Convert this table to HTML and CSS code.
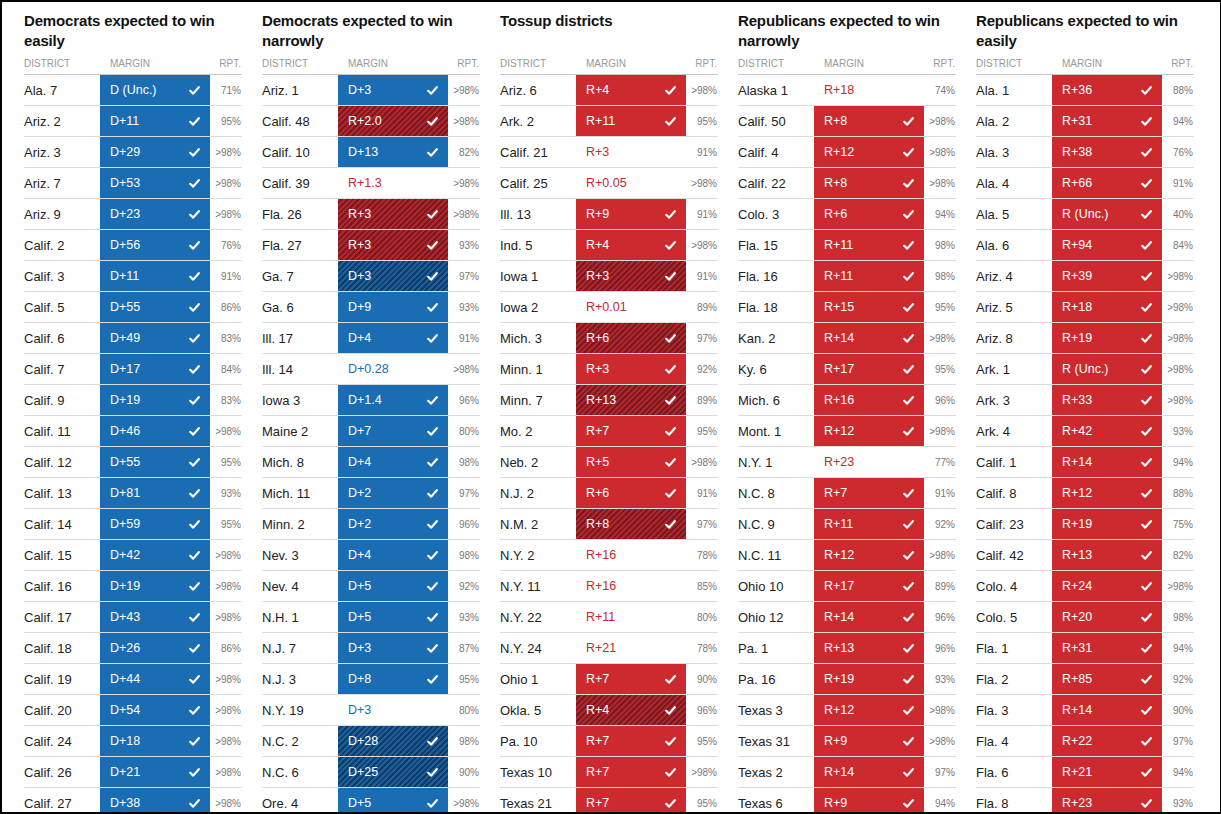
FILE: index.html
```html
<!DOCTYPE html>
<html>
<head>
<meta charset="utf-8">
<link rel="stylesheet" href="styles.css">
</head>
<body>
<div class="frame">
  <div class="board" id="board"></div>
</div>
<script src="script.js"></script>
</body>
</html>
```
FILE: styles.css
```css
html, body {
  margin: 0;
  padding: 0;
  background: #fff;
}
body {
  font-family: "Liberation Sans", Arial, sans-serif;
  color: #222;
}
.frame {
  box-sizing: border-box;
  width: 1221px;
  height: 814px;
  border: 2px solid #000;
  border-right-width: 1px;
  overflow: hidden;
}
.board {
  display: grid;
  grid-template-columns: repeat(5, 218px);
  column-gap: 20px;
  padding: 9px 0 0 22px;
}
.col {
  display: flex;
  flex-direction: column;
}
.title {
  margin: 0;
  font-size: 15px;
  line-height: 20px;
  height: 40px;
  font-weight: bold;
  color: #121212;
  letter-spacing: -0.15px;
}
.row {
  display: grid;
  grid-template-columns: 76px 110px 1fr;
  height: 30px;
  border-bottom: 1px solid #dcdcdc;
  align-items: center;
}
.row.head {
  height: 12px;
  padding: 7px 0 4px;
  border-bottom: 1px solid #c8c8c8;
  font-size: 10px;
  line-height: 12px;
  color: #999;
  text-transform: uppercase;
}
.row.head .mh {
  padding-left: 10px;
}
.dist {
  font-size: 13px;
  color: #222;
}
.rpt {
  text-align: right;
  font-size: 10px;
  color: #777;
  padding-right: 1px;
}
.row.head .rpt {
  color: #999;
}
.m {
  height: 100%;
  display: flex;
  align-items: center;
  justify-content: space-between;
  padding: 0 10px;
  font-size: 12.5px;
  color: #fff;
}
.chk {
  display: block;
}
.b {
  background: #1a6db3;
}
.r {
  background: #cd2a30;
}
.bh {
  background: repeating-linear-gradient(135deg, #1c5f9c 0 2px, #0e3c68 2px 4px);
}
.rh {
  background: repeating-linear-gradient(135deg, #b1262c 0 2px, #7a1a1e 2px 4px);
}
.bt {
  color: #1a6db3;
}
.rt {
  color: #c9272d;
}
```
FILE: script.js
```js
var cols = [
 {t:"Democrats expected to win<br>easily", rows:[
  ["Ala. 7","D (Unc.)","b","71%"],["Ariz. 2","D+11","b","95%"],["Ariz. 3","D+29","b",">98%"],["Ariz. 7","D+53","b",">98%"],
  ["Ariz. 9","D+23","b",">98%"],["Calif. 2","D+56","b","76%"],["Calif. 3","D+11","b","91%"],["Calif. 5","D+55","b","86%"],
  ["Calif. 6","D+49","b","83%"],["Calif. 7","D+17","b","84%"],["Calif. 9","D+19","b","83%"],["Calif. 11","D+46","b",">98%"],
  ["Calif. 12","D+55","b","95%"],["Calif. 13","D+81","b","93%"],["Calif. 14","D+59","b","95%"],["Calif. 15","D+42","b",">98%"],
  ["Calif. 16","D+19","b",">98%"],["Calif. 17","D+43","b",">98%"],["Calif. 18","D+26","b","86%"],["Calif. 19","D+44","b",">98%"],
  ["Calif. 20","D+54","b",">98%"],["Calif. 24","D+18","b",">98%"],["Calif. 26","D+21","b",">98%"],["Calif. 27","D+38","b",">98%"]]},
 {t:"Democrats expected to win<br>narrowly", rows:[
  ["Ariz. 1","D+3","b",">98%"],["Calif. 48","R+2.0","rh",">98%"],["Calif. 10","D+13","b","82%"],["Calif. 39","R+1.3","rt",">98%"],
  ["Fla. 26","R+3","rh",">98%"],["Fla. 27","R+3","rh","93%"],["Ga. 7","D+3","bh","97%"],["Ga. 6","D+9","b","93%"],
  ["Ill. 17","D+4","b","91%"],["Ill. 14","D+0.28","bt",">98%"],["Iowa 3","D+1.4","b","96%"],["Maine 2","D+7","b","80%"],
  ["Mich. 8","D+4","b","98%"],["Mich. 11","D+2","b","97%"],["Minn. 2","D+2","b","96%"],["Nev. 3","D+4","b","98%"],
  ["Nev. 4","D+5","b","92%"],["N.H. 1","D+5","b","93%"],["N.J. 7","D+3","b","87%"],["N.J. 3","D+8","b","95%"],
  ["N.Y. 19","D+3","bt","80%"],["N.C. 2","D+28","bh","98%"],["N.C. 6","D+25","bh","90%"],["Ore. 4","D+5","b",">98%"]]},
 {t:"Tossup districts", rows:[
  ["Ariz. 6","R+4","r",">98%"],["Ark. 2","R+11","r","95%"],["Calif. 21","R+3","rt","91%"],["Calif. 25","R+0.05","rt",">98%"],
  ["Ill. 13","R+9","r","91%"],["Ind. 5","R+4","r",">98%"],["Iowa 1","R+3","rh","91%"],["Iowa 2","R+0.01","rt","89%"],
  ["Mich. 3","R+6","rh","97%"],["Minn. 1","R+3","r","92%"],["Minn. 7","R+13","rh","89%"],["Mo. 2","R+7","r","95%"],
  ["Neb. 2","R+5","r",">98%"],["N.J. 2","R+6","r","91%"],["N.M. 2","R+8","rh","97%"],["N.Y. 2","R+16","rt","78%"],
  ["N.Y. 11","R+16","rt","85%"],["N.Y. 22","R+11","rt","80%"],["N.Y. 24","R+21","rt","78%"],["Ohio 1","R+7","r","90%"],
  ["Okla. 5","R+4","rh","96%"],["Pa. 10","R+7","r","95%"],["Texas 10","R+7","r",">98%"],["Texas 21","R+7","r","95%"]]},
 {t:"Republicans expected to win<br>narrowly", rows:[
  ["Alaska 1","R+18","rt","74%"],["Calif. 50","R+8","r",">98%"],["Calif. 4","R+12","r",">98%"],["Calif. 22","R+8","r",">98%"],
  ["Colo. 3","R+6","r","94%"],["Fla. 15","R+11","r","98%"],["Fla. 16","R+11","r","98%"],["Fla. 18","R+15","r","95%"],
  ["Kan. 2","R+14","r",">98%"],["Ky. 6","R+17","r","95%"],["Mich. 6","R+16","r","96%"],["Mont. 1","R+12","r",">98%"],
  ["N.Y. 1","R+23","rt","77%"],["N.C. 8","R+7","r","91%"],["N.C. 9","R+11","r","92%"],["N.C. 11","R+12","r",">98%"],
  ["Ohio 10","R+17","r","89%"],["Ohio 12","R+14","r","96%"],["Pa. 1","R+13","r","96%"],["Pa. 16","R+19","r","93%"],
  ["Texas 3","R+12","r",">98%"],["Texas 31","R+9","r",">98%"],["Texas 2","R+14","r","97%"],["Texas 6","R+9","r","94%"]]},
 {t:"Republicans expected to win<br>easily", rows:[
  ["Ala. 1","R+36","r","88%"],["Ala. 2","R+31","r","94%"],["Ala. 3","R+38","r","76%"],["Ala. 4","R+66","r","91%"],
  ["Ala. 5","R (Unc.)","r","40%"],["Ala. 6","R+94","r","84%"],["Ariz. 4","R+39","r",">98%"],["Ariz. 5","R+18","r",">98%"],
  ["Ariz. 8","R+19","r",">98%"],["Ark. 1","R (Unc.)","r",">98%"],["Ark. 3","R+33","r",">98%"],["Ark. 4","R+42","r","93%"],
  ["Calif. 1","R+14","r","94%"],["Calif. 8","R+12","r","88%"],["Calif. 23","R+19","r","75%"],["Calif. 42","R+13","r","82%"],
  ["Colo. 4","R+24","r",">98%"],["Colo. 5","R+20","r","98%"],["Fla. 1","R+31","r","94%"],["Fla. 2","R+85","r","92%"],
  ["Fla. 3","R+14","r","90%"],["Fla. 4","R+22","r","97%"],["Fla. 6","R+21","r","94%"],["Fla. 8","R+23","r","93%"]]}
];
var check = '<svg class="chk" width="11" height="9" viewBox="0 0 11 9"><path d="M1.2 4.8 L4.2 7.6 L9.8 1.2" fill="none" stroke="#fff" stroke-width="2.2" stroke-linecap="round" stroke-linejoin="round"/></svg>';
var html = "";
cols.forEach(function(c){
  html += '<section class="col"><h2 class="title">'+c.t+'</h2>';
  html += '<div class="row head"><span>District</span><span class="mh">Margin</span><span class="rpt">Rpt.</span></div>';
  c.rows.forEach(function(r){
    var filled = (r[2]!=="rt" && r[2]!=="bt");
    html += '<div class="row"><span class="dist">'+r[0]+'</span><span class="m '+r[2]+'"><span>'+r[1]+'</span>'+(filled?check:'')+'</span><span class="rpt">'+r[3]+'</span></div>';
  });
  html += '</section>';
});
document.getElementById("board").innerHTML = html;
```
